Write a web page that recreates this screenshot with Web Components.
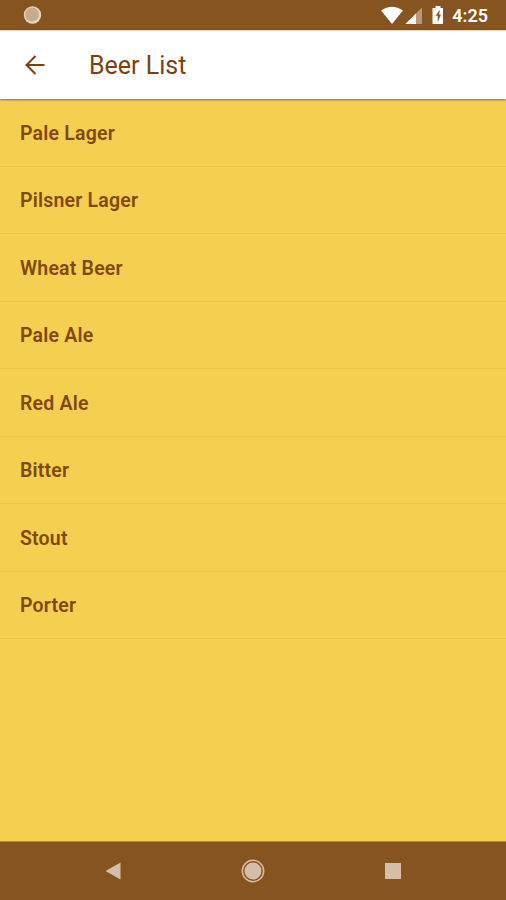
<!DOCTYPE html>
<html lang="en">
<head>
<meta charset="utf-8">
<title>Beer List</title>
<style>
    html, body { margin: 0; height: 100%; }
    body { font-family: Roboto, "Noto Sans", sans-serif; overflow: hidden; }
</style>
</head>
<body>
<beer-app>
    <status-bar slot="status" time="4:25"></status-bar>
    <app-header slot="header">Beer List</app-header>
    <beer-item>Pale Lager</beer-item>
    <beer-item>Pilsner Lager</beer-item>
    <beer-item>Wheat Beer</beer-item>
    <beer-item>Pale Ale</beer-item>
    <beer-item>Red Ale</beer-item>
    <beer-item>Bitter</beer-item>
    <beer-item>Stout</beer-item>
    <beer-item>Porter</beer-item>
    <nav-bar slot="nav"></nav-bar>
</beer-app>

<script>
class BeerApp extends HTMLElement {
    constructor() {
        super();
        this.attachShadow({ mode: 'open' }).innerHTML = `
            <style>
                :host {
                    --brown: #86541f;
                    --text-brown: #82490f;
                    --yellow: #f5cf4f;
                    --divider: #ebc548;
                    --nav-icon: #d3bfa9;
                    display: flex;
                    flex-direction: column;
                    height: 100vh;
                    background: var(--yellow);
                }
                main { flex: 1; min-height: 0; }
            </style>
            <slot name="status"></slot>
            <slot name="header"></slot>
            <main><slot></slot></main>
            <slot name="nav"></slot>
        `;
    }
}

class StatusBar extends HTMLElement {
    constructor() {
        super();
        this.attachShadow({ mode: 'open' });
    }

    connectedCallback() {
        this.shadowRoot.innerHTML = `
            <style>
                :host {
                    display: flex;
                    justify-content: space-between;
                    align-items: center;
                    box-sizing: border-box;
                    height: 30px;
                    padding: 0 18px 0 23px;
                    background: var(--brown);
                    color: #fff;
                }
                .right { display: flex; align-items: center; }
                .time { font-size: 18px; font-weight: 600; line-height: 30px; padding-top: 2px; }
                svg { display: block; }
            </style>
            <svg width="20" height="30" viewBox="0 0 20 30">
                <circle cx="9.5" cy="15" r="8.7" fill="#e6d5c2"/>
                <circle cx="9" cy="14.6" r="7" fill="#c8ab8b"/>
            </svg>
            <div class="right">
                <svg width="72" height="30" viewBox="380 0 72 30">
                    <!-- wifi -->
                    <path d="M381 10.6Q392 2.8 403 10.6L392 24Z" fill="#fff"/>
                    <!-- signal -->
                    <path d="M422 7.5V24H405.5Z" fill="#b9987a"/>
                    <path d="M416 13.5V24H405.5Z" fill="#fff"/>
                    <!-- battery -->
                    <path d="M435.5 6h5v2h2.5v16h-10.500V8h3Z" fill="#fff"/>
                    <path d="M439.5 10.5L436 15.5H438V21L440.5 14.8H438.8Z" fill="#86541f" stroke="#86541f" stroke-width=".5"/>
                </svg>
                <span class="time">${this.getAttribute('time')}</span>
            </div>
        `;
    }
}

class AppHeader extends HTMLElement {
    constructor() {
        super();
        this.attachShadow({ mode: 'open' }).innerHTML = `
            <style>
                :host {
                    display: flex;
                    align-items: center;
                    gap: 44px;
                    box-sizing: border-box;
                    height: 69px;
                    padding: 1px 0 0 25px;
                    background: #fff;
                    color: #803f10;
                    font-size: 25px;
                    box-shadow: 0 1px 2px rgba(100, 75, 0, 0.7);
                    border-top: 1px solid #e4d8cc;
                    z-index: 1;
                }
                svg { display: block; margin-bottom: 2px; }
            </style>
            <svg width="20" height="20" viewBox="0 0 20 20" fill="none" stroke="#7f3f14" stroke-width="2">
                <path d="M19.5 10H2M10.5 1L1.5 10L10.5 19"/>
            </svg>
            <span><slot></slot></span>
        `;
    }
}

class BeerItem extends HTMLElement {
    constructor() {
        super();
        this.attachShadow({ mode: 'open' }).innerHTML = `
            <style>
                :host {
                    display: flex;
                    align-items: center;
                    box-sizing: border-box;
                    height: 67.5px;
                    padding: 2px 0 0 20px;
                    border-bottom: 1px solid var(--divider);
                    color: var(--text-brown);
                    font-size: 19.5px;
                    font-weight: 600;
                    letter-spacing: 0.2px;
                }
            </style>
            <span><slot></slot></span>
        `;
    }
}

class NavBar extends HTMLElement {
    constructor() {
        super();
        this.attachShadow({ mode: 'open' }).innerHTML = `
            <style>
                :host {
                    display: flex;
                    justify-content: center;
                    align-items: center;
                    gap: 116px;
                    box-sizing: border-box;
                    height: 59px;
                    border-top: 1px solid #b58732;
                    background: var(--brown);
                }
                svg { display: block; fill: var(--nav-icon); }
            </style>
            <svg width="24" height="24" viewBox="0 0 24 24"><path d="M4.5 12L19.5 3.5V20.5Z"/></svg>
            <svg width="24" height="24" viewBox="0 0 24 24">
                <circle cx="12" cy="12" r="10.7" fill="none" stroke="#d3bfa9" stroke-width="1.5"/>
                <circle cx="12" cy="12" r="8.5"/>
            </svg>
            <svg width="24" height="24" viewBox="0 0 24 24"><path d="M4 4h16v16H4Z"/></svg>
        `;
    }
}

customElements.define('beer-app', BeerApp);
customElements.define('status-bar', StatusBar);
customElements.define('app-header', AppHeader);
customElements.define('beer-item', BeerItem);
customElements.define('nav-bar', NavBar);
</script>
</body>
</html>
